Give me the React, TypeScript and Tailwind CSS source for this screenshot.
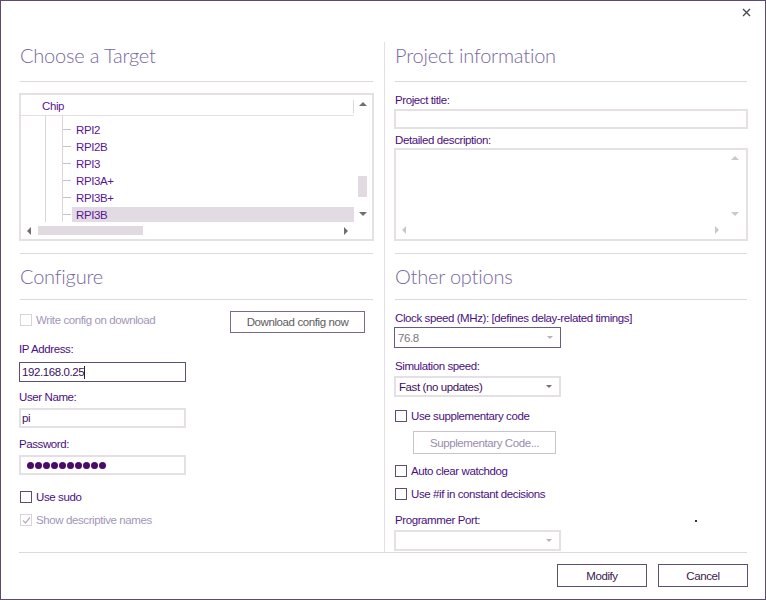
import React from "react";

const LABEL = "font-['Liberation_Sans',Arial,sans-serif] text-[11.5px] tracking-[-0.4px] leading-[14px]";
const TITLE = "font-['Lato','Open_Sans',sans-serif] font-light text-[20px] tracking-[-0.2px] leading-[26px] text-[#7768a0]";

const rpis = ["RPI2", "RPI2B", "RPI3", "RPI3A+", "RPI3B+", "RPI3B"];

// small triangles used by the scrollbars and combo boxes
const Tri = ({ dir, color = "#6f6f6f", size = 4 }: { dir: "up" | "down" | "left" | "right"; color?: string; size?: number }) => {
  const s = size;
  const styles: Record<string, React.CSSProperties> = {
    up: { borderLeft: `${s}px solid transparent`, borderRight: `${s}px solid transparent`, borderBottom: `${s}px solid ${color}` },
    down: { borderLeft: `${s}px solid transparent`, borderRight: `${s}px solid transparent`, borderTop: `${s}px solid ${color}` },
    left: { borderTop: `${s}px solid transparent`, borderBottom: `${s}px solid transparent`, borderRight: `${s}px solid ${color}` },
    right: { borderTop: `${s}px solid transparent`, borderBottom: `${s}px solid transparent`, borderLeft: `${s}px solid ${color}` },
  };
  return <span className="block w-0 h-0" style={styles[dir]} />;
};

const CheckBox = ({ label, disabled, checked }: { label: string; disabled?: boolean; checked?: boolean }) => (
  <div className={`flex items-center ${LABEL} ${disabled ? "text-[#a396b8]" : "text-[#4a0f80]"}`}>
    <span
      className={`w-[12px] h-[12px] border flex items-center justify-center ${disabled ? "border-[#d9d3d9]" : "border-[#5f4f6f]"}`}
    >
      {checked && (
        <svg width="9" height="9" viewBox="0 0 9 9">
          <path d="M1 4.5 L3.5 7 L8 1.5" stroke="#b8b0c0" strokeWidth="1.3" fill="none" />
        </svg>
      )}
    </span>
    <span className="ml-[4px]">{label}</span>
  </div>
);

const Combo = ({ value, dark, muted }: { value: string; dark?: boolean; muted?: boolean }) => (
  <div
    className={`w-[167px] h-[21px] flex items-center justify-between pl-[3px] pr-[7px] ${LABEL} ${
      dark ? "border border-[#6b5b7b]" : "border-2 border-[#e4e0e4]"
    } ${muted ? "text-[#7a7a7a]" : "text-[#3b1060]"}`}
  >
    <span>{value}</span>
    <Tri dir="down" color={muted || !value ? "#b5b5b5" : "#6f6f6f"} size={3} />
  </div>
);

export default function App() {
  return (
    <div className="w-[766px] h-[600px] border border-[#5b4a6e] bg-white flex flex-col">
      {/* header with close button */}
      <div className="h-[41px] flex justify-end pr-[14px] pt-[7px]">
        <svg width="9" height="9" viewBox="0 0 9 9">
          <path d="M1 1 L8 8 M8 1 L1 8" stroke="#4a4a4a" strokeWidth="1.4" />
        </svg>
      </div>

      <div className="flex ml-[18px] h-[510px]">
        {/* left column */}
        <div className="w-[355px] flex flex-col">
          <div className={`h-[40px] mx-[1px] border-b border-[#dcd9dc] ${TITLE}`}>Choose a Target</div>

          {/* target tree */}
          <div className="mt-[11px] h-[148px] w-[355px] border-2 border-[#e4e0e4] flex flex-col">
            <div className="flex h-[127px]">
              <div className="w-[333px] flex flex-col">
                <div className={`h-[21px] border-b border-[#e4e0e4] flex items-center justify-between pl-[21px] pt-[2px] text-[#5a1595] ${LABEL}`}>
                  <span>Chip</span>
                  <span className="w-px h-[13px] bg-[#dcd6dc]" />
                </div>
                <div className="relative flex-1 overflow-hidden pt-[5px]">
                  <span className="absolute left-[24px] top-0 bottom-0 w-px bg-[#dcd6dc]" />
                  <span className="absolute left-[41px] top-0 bottom-0 w-px bg-[#dcd6dc]" />
                  {rpis.map((r) => (
                    <div key={r} className="h-[17px] flex items-center pl-[42px]">
                      <span className="w-[8px] h-px bg-[#c8c2c8]" />
                      <span
                        className={`flex-1 h-[16px] ml-[1px] pl-[4px] flex items-center text-[#5a1595] ${LABEL} ${
                          r === "RPI3B" ? "bg-[#e3dbe3]" : ""
                        }`}
                      >
                        {r}
                      </span>
                    </div>
                  ))}
                </div>
              </div>
              {/* vertical scrollbar */}
              <div className="w-[17px] flex flex-col items-center">
                <div className="h-[17px] flex items-center justify-center mt-[1px]">
                  <Tri dir="up" size={4} />
                </div>
                <div className="mt-[63px] w-[9px] h-[22px] bg-[#e1dbe1]" />
                <div className="mt-[8px] h-[17px] flex items-center justify-center">
                  <Tri dir="down" size={4} />
                </div>
              </div>
            </div>
            {/* horizontal scrollbar */}
            <div className="h-[17px] flex items-center pl-[6px]">
              <Tri dir="left" size={4} />
              <div className="ml-[7px] w-[105px] h-[9px] bg-[#e1dbe1]" />
              <div className="ml-auto mr-[24px]">
                <Tri dir="right" size={4} />
              </div>
            </div>
          </div>

          <div className={`mt-[12px] h-[47px] mx-[1px] border-t border-b border-[#dcd9dc] pt-[9px] ${TITLE}`}>Configure</div>

          <div className="mt-[11px] flex justify-between items-start">
            <div className="mt-[2px] ml-[1px]">
              <CheckBox label="Write config on download" disabled />
            </div>
            <div className={`w-[135px] h-[22px] mr-[9px] border border-[#7a6a8a] flex items-center justify-center text-[#5d5d5d] ${LABEL}`}>
              Download config now
            </div>
          </div>

          <div className={`mt-[9px] text-[#4a0f80] ${LABEL}`}>IP Address:</div>
          <div className={`mt-[6px] w-[167px] h-[20px] border border-[#5f4f6f] flex items-center pl-[2px] text-[#3b1060] ${LABEL}`}>
            192.168.0.25<span className="w-px h-[13px] bg-[#222]" />
          </div>

          <div className={`mt-[8px] text-[#4a0f80] ${LABEL}`}>User Name:</div>
          <div className={`mt-[4px] w-[167px] h-[20px] border-2 border-[#e4e0e4] flex items-center pl-[1px] text-[#3b1060] ${LABEL}`}>
            pi
          </div>

          <div className={`mt-[9px] text-[#4a0f80] ${LABEL}`}>Password:</div>
          <div className="mt-[4px] w-[167px] h-[20px] border-2 border-[#e4e0e4] flex items-center pl-[6px] gap-[1px]">
            {Array.from({ length: 10 }).map((_, i) => (
              <span key={i} className="w-[7px] h-[7px] rounded-full bg-[#4a0a6a]" />
            ))}
          </div>

          <div className="mt-[15px] ml-[1px]">
            <CheckBox label="Use sudo" />
          </div>
          <div className="mt-[9px] ml-[1px]">
            <CheckBox label="Show descriptive names" disabled checked />
          </div>
        </div>

        {/* column divider */}
        <div className="ml-[10px] w-px bg-[#e6dee6]" />

        {/* right column */}
        <div className="ml-[9px] w-[354px] flex flex-col">
          <div className={`h-[40px] mx-[1px] border-b border-[#dcd9dc] ${TITLE}`}>Project information</div>

          <div className={`mt-[11px] ml-[1px] text-[#4a0f80] ${LABEL}`}>Project title:</div>
          <div className="mt-[2px] h-[20px] border-2 border-[#e4e0e4]" />

          <div className={`mt-[4px] ml-[1px] text-[#4a0f80] ${LABEL}`}>Detailed description:</div>
          <div className="mt-[1px] h-[93px] border-2 border-[#e4e0e4] flex">
            <div className="flex-1 flex flex-col justify-end pb-[5px] pl-[6px]">
              <Tri dir="left" color="#c9c9c9" size={4} />
            </div>
            <div className="w-[22px] flex flex-col items-center pt-[6px] pb-[5px]">
              <Tri dir="up" color="#c9c9c9" size={4} />
              <div className="mt-[52px]">
                <Tri dir="down" color="#c9c9c9" size={4} />
              </div>
              <div className="mt-[10px] -ml-[36px]">
                <Tri dir="right" color="#c9c9c9" size={4} />
              </div>
            </div>
          </div>

          <div className={`mt-[12px] h-[47px] mx-[1px] border-t border-b border-[#dcd9dc] pt-[9px] ${TITLE}`}>Other options</div>

          <div className={`mt-[11px] ml-[1px] text-[#4a0f80] ${LABEL}`}>Clock speed (MHz): [defines delay-related timings]</div>
          <div className="mt-[2px]">
            <Combo value="76.8" dark muted />
          </div>

          <div className={`mt-[11px] ml-[1px] text-[#4a0f80] ${LABEL}`}>Simulation speed:</div>
          <div className="mt-[3px]">
            <Combo value="Fast (no updates)" />
          </div>

          <div className="mt-[12px] ml-[1px]">
            <CheckBox label="Use supplementary code" />
          </div>
          <div className={`mt-[8px] ml-[19px] w-[143px] h-[23px] border border-[#c9c4c9] flex items-center justify-center text-[#9a8cab] ${LABEL}`}>
            Supplementary Code...
          </div>
          <div className="mt-[10px] ml-[1px]">
            <CheckBox label="Auto clear watchdog" />
          </div>
          <div className="mt-[9px] ml-[1px]">
            <CheckBox label="Use #if in constant decisions" />
          </div>

          <div className={`mt-[12px] ml-[1px] relative text-[#4a0f80] ${LABEL}`}>
            Programmer Port:
            <span className="absolute left-[300px] top-[7px] w-[2px] h-[2px] bg-[#333]" />
          </div>
          <div className="mt-[3px]">
            <Combo value="" />
          </div>
        </div>
      </div>

      {/* footer */}
      <div className="mx-[18px] w-[728px] border-t border-[#dcd9dc]" />
      <div className="flex justify-end gap-[11px] pr-[17px] mt-[11px]">
        <div className={`w-[90px] h-[23px] border border-[#5f4f6f] flex items-center justify-center text-[#3b2050] ${LABEL}`}>Modify</div>
        <div className={`w-[90px] h-[23px] border border-[#5f4f6f] flex items-center justify-center text-[#3b2050] ${LABEL}`}>Cancel</div>
      </div>
    </div>
  );
}
